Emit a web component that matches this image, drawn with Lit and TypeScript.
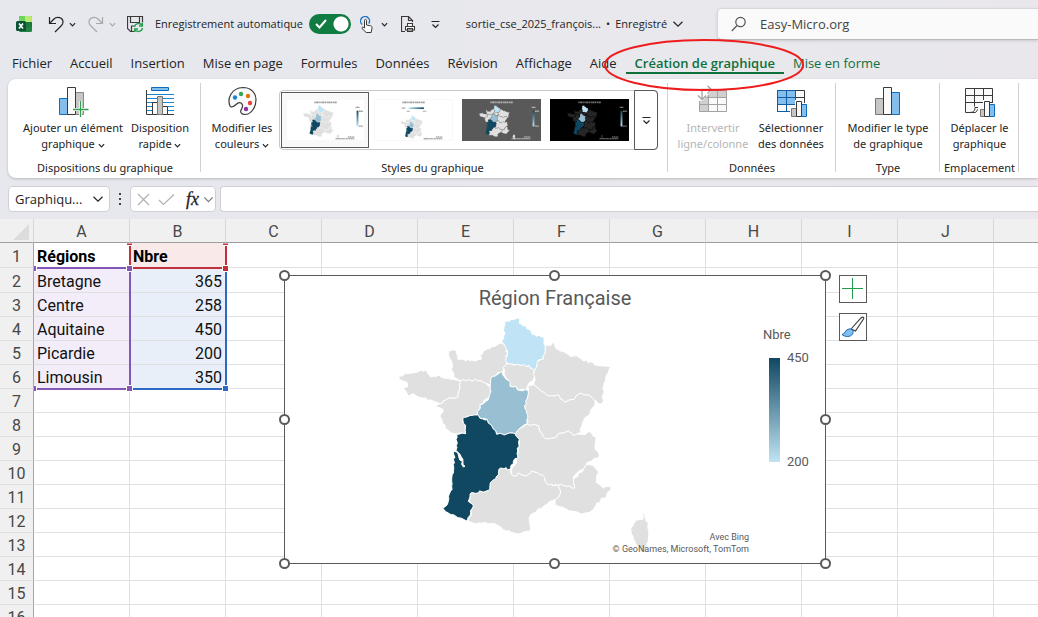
import { LitElement, html, svg, css, nothing } from "lit";
import { customElement, state } from "lit/decorators.js";
import { classMap } from "lit/directives/class-map.js";

type Tone = "none" | "low" | "mid" | "high";

const REGIONS: { tone: Tone; points: string }[] = [
  { tone: "none", points: "203 150 230 154 233 178 285 184 303 180 300 166 315 152 366 130 380 140 380 190 370 203 368 215 335 232 333 256 316 250 300 242 238 242 220 232 216 190 205 165" },
  { tone: "none", points: "55 232 75 222 115 216 138 210 152 232 180 228 195 236 238 242 240 268 235 290 205 296 180 312 160 304 130 295 100 282 85 290 70 265 82 262 78 246 60 240" },
  { tone: "none", points: "238 242 300 242 316 250 333 262 330 285 310 310 300 315 293 346 270 350 248 356 256 385 257 402 225 402 195 386 180 350 190 330 165 322 180 312 205 296 235 290 240 268" },
  { tone: "none", points: "370 203 380 193 420 196 448 198 463 213 460 240 445 254 440 272 412 268 408 260 390 260 385 240 372 222" },
  { tone: "none", points: "496 140 512 138 524 122 530 148 560 162 572 172 590 168 610 184 640 190 655 198 693 200 680 225 672 250 668 308 655 312 640 300 630 288 600 280 580 300 555 308 535 285 500 286 480 270 462 255 463 213 474 184 490 178" },
  { tone: "none", points: "443 258 462 255 480 270 500 286 535 285 555 308 580 300 600 280 630 288 645 305 640 322 620 350 605 380 600 400 582 408 565 394 540 400 530 412 495 416 485 400 475 378 442 374 440 340 434 318 442 295" },
  { tone: "none", points: "442 374 475 378 485 400 495 416 530 412 540 400 565 394 582 408 600 404 615 405 630 395 648 412 645 440 658 470 620 490 610 510 590 520 580 540 585 565 545 555 505 556 490 530 455 514 440 528 415 520 400 530 395 508 410 490 418 430 405 402 420 385" },
  { tone: "none", points: "362 505 392 508 400 530 415 520 440 528 455 514 490 530 505 556 535 556 542 580 525 600 490 620 450 650 448 695 415 703 370 690 350 675 318 668 290 672 265 664 280 620 268 605 270 583 325 572 335 545 355 525" },
  { tone: "none", points: "535 556 545 555 585 565 580 540 610 510 620 495 645 500 655 520 650 550 670 565 693 562 680 590 650 610 640 630 605 643 560 628 525 615 525 600 542 580" },
  { tone: "none", points: "792 638 796 655 806 670 807 700 802 730 796 760 780 755 765 725 755 705 753 685 765 665 788 660" },
  { tone: "low", points: "373 68 415 54 418 72 438 78 440 88 452 92 456 104 492 112 496 140 490 178 474 182 470 200 463 213 448 198 420 196 395 193 380 190 380 150 366 128 372 115" },
  { tone: "mid", points: "335 232 368 217 372 230 385 242 390 260 408 260 412 270 443 272 442 295 434 318 440 340 442 372 420 385 405 402 350 404 340 388 322 360 300 355 293 346 300 315 325 300 333 275" },
  { tone: "high", points: "248 356 293 346 300 356 322 360 340 388 350 404 405 402 418 420 413 455 414 475 400 485 392 508 362 505 355 525 335 545 325 572 270 583 265 605 280 620 262 664 240 655 205 640 188 625 205 605 215 560 220 520 223 455 235 465 250 502 255 500 243 470 228 452 232 430 230 404 257 402 256 385" },
];

/* Breaks each straight edge into small steps; the jitter depends only on the
   position, so neighbouring regions keep a common border. */
function coastline(points: string): string {
  const n = points.split(" ").map(Number);
  const out: string[] = [];
  for (let i = 0; i < n.length; i += 2) {
    const j = (i + 2) % n.length;
    const [x1, y1, x2, y2] = [n[i], n[i + 1], n[j], n[j + 1]];
    const steps = Math.max(1, Math.round(Math.hypot(x2 - x1, y2 - y1) / 8));
    for (let s = 0; s < steps; s++) {
      const x = x1 + ((x2 - x1) * s) / steps;
      const y = y1 + ((y2 - y1) * s) / steps;
      const w = s ? 3 : 0;
      out.push(`${(x + Math.sin(x * 12.9 + y * 7.2) * w).toFixed(1)},${(y + Math.cos(x * 5.3 + y * 9.1) * w).toFixed(1)}`);
    }
  }
  return out.join(" ");
}

const FILLS: Record<Tone, string> = { none: "#e0e0e0", low: "#c0e4f5", mid: "#99bfd2", high: "#104861" };

const mapShapes = (base = FILLS.none, line = "#ffffff", width = 3) =>
  REGIONS.map(
    (r) => svg`<polygon points=${coastline(r.points)} fill=${r.tone === "none" ? base : FILLS[r.tone]}
      stroke=${line} stroke-width=${width} stroke-linejoin="round" />`
  );

const ramp = (id: string, across = false) => svg`<linearGradient id=${id} x1="0" y1="0" x2=${across ? 1 : 0} y2=${across ? 0 : 1}>
  <stop offset="0" stop-color=${across ? FILLS.low : FILLS.high} /><stop offset="1" stop-color=${across ? FILLS.high : FILLS.low} /></linearGradient>`;

const thumb = (i: number, bg: string, base: string, ink: string, line: string) => html`
  <svg class="thumb" viewBox="0 0 542 288" preserveAspectRatio="none" aria-hidden="true">
    <defs>${ramp("g" + i, i === 1)}</defs>
    <rect width="542" height="288" fill=${bg} stroke="#f4f4f4" stroke-width=${i < 2 ? 8 : 0} />
    <path d="M194 23H350" stroke=${ink} stroke-width="13" stroke-dasharray="9 3 16 3 7 4" opacity=".6" />
    ${i === 1
      ? svg`<g transform="translate(165 100) scale(.245)">${mapShapes(base, line, 5)}</g>
        <rect x="238" y="57" width="104" height="12" fill="url(#g1)" />
        <path d="M190 63h26M225 84h22M335 84h24" stroke=${ink} stroke-width="8" stroke-dasharray="7 2" opacity=".6" />`
      : svg`<g transform="translate(96 25) scale(.333)">${mapShapes(base, line, 4)}</g>
        <rect x="484" y="80" width="13" height="108" fill=${"url(#g" + i + ")"} />
        <path d="M478 57h28M502 84h24M502 186h24" stroke=${ink} stroke-width="9" stroke-dasharray="7 2" opacity=".7" />`}
    <path d="M425 260h45M340 272h130" stroke=${ink} stroke-width="7" stroke-dasharray="12 2 7 2" opacity=".7" />
  </svg>`;

const chevron = (size = 7) => html`<svg class="chev" width=${size} height=${size} viewBox="0 0 8 8" aria-hidden="true">
  <path d="M1 2.5 4 5.5 7 2.5" fill="none" stroke="currentColor" stroke-width="1.2" vector-effect="non-scaling-stroke" /></svg>`;

const icon = (body: unknown, w = 32, h = 32) => html`<svg width=${w} height=${h} viewBox=${`0 0 ${w} ${h}`} fill="none" aria-hidden="true">${body}</svg>`;

const ICONS = {
  add: icon(svg`<path d="M2.5 13.5h8v16h-8z" fill="#83beec" stroke="#0f6cbd"/><path d="M18.5 7.500h8v22h-8z" fill="#c8c6c4" stroke="#8a8886"/>
    <path d="M10.5 2.500h8v27h-8z" fill="#fafafa" stroke="#3b3a39"/><path d="M23.5 16v16M16 24.500h15.500" stroke="#fff" stroke-width="3"/><path d="M23.5 16v16M16 24.500h15.500" stroke="#2ea04f" stroke-width="1.3"/>`),
  layout: icon(svg`<path d="M7.5 2.5h17v3h-17z" fill="#83beec" stroke="#0f6cbd"/><path d="M3 9.500h27M3 13.500h27M3 17.500h27M3 21.500h27M3 25.500h27" stroke="#1a86d0"/>
    <path d="M2.5 5v24.500H30" stroke="#3b3a39"/><path d="M8.5 17.500h5v12h-5zM18.500 21.500h5v8h-5z" fill="#fafafa" stroke="#3b3a39"/><path d="M13.5 11.500h5v18h-5z" fill="#c8c6c4" stroke="#797775"/>`),
  palette: icon(svg`<path d="M4 21C1 14 5 3 17 2.5 25 2.5 30 8 30 14.5c0 8-5 15-11 15-3.500 0-5-2-4-4.500 1-2 2-3 1.500-5-1-3-4-3-6.500-.5-2 2-5 3.500-6 1.500z" fill="#fafafa" stroke="#3b3a39" stroke-width="1.2"/>
    <circle cx="9" cy="12.5" r="2.2" fill="#1a86d0"/><circle cx="15" cy="9" r="2.2" fill="#33a852"/><circle cx="22" cy="11" r="2.2" fill="#e3730f"/><circle cx="24" cy="18" r="2.2" fill="#f03e3e"/><circle cx="20" cy="24" r="2.2" fill="#8e2fa8"/>`),
  swap: icon(svg`<path d="M2.5 5.500h27v21h-27z" fill="#fafafa"/><path d="M2.5 5.500h27v7h-18v14h-9z" fill="#d2d0ce"/><path d="M2.5 5.500h27v21h-27zM2.500 12.500h27M2.500 19.500h27M11.500 5.500v21M20.500 5.500v21" stroke="#a3a2a0"/>
    <path d="M0 0h14v7L5 16H0z" fill="#fff"/><path d="M5 14V4.500h9M1 10.500l4 4 4-4M10.500 1l4 3.500-4 4" stroke="#a3a2a0" stroke-width="1.3"/>`),
  select: icon(svg`<path d="M2.5 5.500h27v21h-27z" fill="#fafafa" stroke="#3b3a39"/><path d="M20.5 5.500v7h9" stroke="#3b3a39"/><path d="M2.5 5.500h18v14h-18z" fill="#83beec"/><path d="M2.5 12.500h18M2.500 19.500h18M11.500 5.500v21M20.500 5.500v14M2.500 5.500h18M2.500 5.500v21h13" stroke="#0f5ba8"/>
    <path d="M15 22h5v-7h7v3h5v14H15z" fill="#fff"/><path d="M16.5 23.500h5v8h-5z" fill="#c8c6c4" stroke="#797775"/><path d="M26.5 19.500h5v12h-5z" fill="#83beec" stroke="#0f6cbd"/><path d="M21.5 16.500h5v15h-5z" fill="#fafafa" stroke="#3b3a39"/>`),
  type: icon(svg`<path d="M3.5 13.500h8v16h-8z" fill="#c8c6c4" stroke="#797775"/><path d="M19.5 7.500h8v22h-8z" fill="#83beec" stroke="#0f6cbd"/><path d="M11.5 2.500h8v27h-8z" fill="#fafafa" stroke="#3b3a39"/>`),
  move: icon(svg`<path d="M2.5 3.500h27v19h-13l-4 5h-10z" fill="#fafafa" stroke="#3b3a39"/><path d="M2.5 10.500h27M2.500 17.500h27M11.500 3.500v18M20.500 3.500v18M6 27.500c4 0 6-1 6-5h6" stroke="#3b3a39"/>
    <path d="M15 22h5v-7h7v3h5v14H15z" fill="#fff"/><path d="M17.5 24.500h5v7h-5z" fill="#c8c6c4" stroke="#797775"/><path d="M26.5 19.500h5v12h-5z" fill="#83beec" stroke="#0f6cbd"/><path d="M21.5 16.500h5v15h-5z" fill="#fafafa" stroke="#3b3a39"/>`),
  excel: icon(svg`<rect x="3" width="13" height="16" rx="1.5" fill="#21833f"/><path d="M3 1.5Q3 0 4.5 0H9v6H3z" fill="#6fd35f"/><path d="M9 0h5.500Q16 0 16 1.500V6H9z" fill="#bdea72"/><path d="M9 6h7v5H9z" fill="#1c7a3a"/><rect y="5" width="10" height="10" rx="1.5" fill="#0b5335"/>
    <path d="M3 7.500l4 5M7 7.500l-4 5" stroke="#fff" stroke-width="1.6"/>`, 16, 16),
  undo: icon(svg`<path d="M1.5 1v6.500H8M1.500 7.500 6 3c3-3 9-1.500 9 3 0 1.500-.5 2.500-1.500 3.500L7 16" stroke="currentColor" stroke-width="1.2"/>`, 16, 17),
  redo: icon(svg`<path d="M14.5 1v6.500H8M14.500 7.500 10 3C7 0 1 1.500 1 6c0 1.500.5 2.500 1.500 3.500L9 16" stroke="currentColor" stroke-width="1.2"/>`, 16, 17),
  save: icon(svg`<path d="M7 15.500H3.500l-3-3V.5h15v6M3.500.5v6h9v-6M4.500 15v-5H7" stroke="#3b3a39" stroke-width="1.2"/>
    <path d="M7.500 11c.5-4 6-4.500 7.500-1.500M15.300 7v3H12M15.500 12c-.5 4-6 4.500-7.500 1.500M7.700 16v-3H11" stroke="#2ea04f" stroke-width="1.5"/>`, 17, 17),
  touch: icon(svg`<path d="M2.200 8.500a4.500 4.500 0 1 1 6.600-1" stroke="#1a78c8" stroke-width="1.4"/><path d="M4.500 11V4.500c0-1.500 2-1.500 2 0V9l4 .8c1.300.3 1.700 1 1.500 2.200l-.8 4.500h-5L2 12.500c-.6-1.200 1-2 2.500-.5z" fill="#fafafa" stroke="#3b3a39"/>`, 14, 17),
  print: icon(svg`<path d="M4 15.500H.5V.5h7l4 4V6M7.500.5v4h4" stroke="#3b3a39" stroke-width="1.2"/><path d="M4.500 10.500h9v3.500h-9zM6.500 10.500v-3h5v3M6.500 12.500h5v3h-5z" fill="#fafafa" stroke="#3b3a39" stroke-width="1.1"/>`, 15, 16),
  more: icon(svg`<path d="M.5 1.500h8M1.500 4.500l3 3 3-3" stroke="currentColor" stroke-width="1.2"/>`, 9, 9),
  search: icon(svg`<circle cx="9.500" cy="6" r="4.700" stroke="#555" stroke-width="1.2"/><path d="M6 9.500.8 15" stroke="#555" stroke-width="1.2"/>`, 15, 16),
  cross: icon(svg`<path d="M1 1l11 11M12 1 1 12" stroke="#b0b0b0" stroke-width="1.2"/>`, 13, 13),
  tick: icon(svg`<path d="M1 7l4.500 4.500L16 1.500" stroke="#b0b0b0" stroke-width="1.2"/>`, 17, 13),
  plus: icon(svg`<path d="M10.500 0v21M0 10.500h21" stroke="#1e9e4a"/>`, 22, 22),
  brush: icon(svg`<path d="M10 13 20 2c1.500-1.500 3.500-1 2.500 1L14.500 15z" fill="#fafafa" stroke="#3b3a39" stroke-width="1.1"/><path d="M1 18.500c3 0 3-5 7-5.500 3.500-.5 5 2.500 3.500 5-2 3.500-8 3-10.500.5z" fill="#83beec" stroke="#0f6cbd"/>`, 24, 22),
};

const TABS = ["Fichier", "Accueil", "Insertion", "Mise en page", "Formules", "Données", "Révision", "Affichage", "Aide", "Création de graphique", "Mise en forme"];
const COLUMNS = ["A", "B", "C", "D", "E", "F", "G", "H", "I", "J", "K"];
const DATA: [string, string][] = [["Régions", "Nbre"], ["Bretagne", "365"], ["Centre", "258"], ["Aquitaine", "450"], ["Picardie", "200"], ["Limousin", "350"]];

@customElement("app-root")
export class AppRoot extends LitElement {
  @state() private tab = "Création de graphique";

  static styles = css`
    * { box-sizing: border-box; }
    :host {
      display: flex; flex-direction: column; height: 100vh; overflow: hidden;
      background: linear-gradient(90deg, #e6e8ee, #e8e8ed 60%, #e9e7ec);
      color: #242424; font: 11px/16px "Noto Sans", "Open Sans", sans-serif;
    }
    button { font: inherit; color: inherit; background: none; border: 0; padding: 0; display: flex; align-items: center; justify-content: center; flex: none; }
    input { font: inherit; color: inherit; min-width: 0; }
    svg { flex: none; display: block; }

    .titlebar { display: flex; align-items: center; height: 48px; padding-left: 16px; flex: none; font-family: "Open Sans", sans-serif; }
    .titlebar > * { flex: none; }
    .undo { margin-left: 16px; gap: 5px; }
    .redo { margin-left: 12px; gap: 5px; color: #a8a8ac; }
    .save { margin: 0 11px; }
    .auto { display: flex; align-items: center; gap: 6px; position: relative; }
    .switch { appearance: none; width: 42px; height: 20px; margin: 0; border-radius: 10px; background: radial-gradient(circle at 32px 10px, #fff 7px, #107c41 8px); }
    .check { position: absolute; right: 24px; top: 4px; pointer-events: none; }
    .touch { margin-left: 9px; gap: 7px; }
    .print { margin: 0 15px 0 13px; }
    .file { display: flex; align-items: center; gap: 5px; margin-left: 25px; width: 220px; }
    .search { display: flex; align-items: center; gap: 14px; flex: 1 1 0; height: 32px; margin-left: 32px; padding-left: 13px; background: #fafafa; border: 1px solid #d8d8dc; border-right: 0; border-bottom-color: #bbb; border-radius: 5px 0 0 5px; box-shadow: 0 1px 3px #0002; }
    .search input { border: 0; background: none; font-size: 13px; color: #444; padding: 0; flex: 1; }

    .tabs { display: flex; height: 31px; flex: none; padding-left: 3px; font: 13px/30px "Open Sans", sans-serif; }
    .tab { position: relative; padding: 0 9px; white-space: nowrap; height: 30px; }
    .tab.green { color: #0f703b; }
    .tab.active { font-weight: 600; }
    .tab.active::after { content: ""; position: absolute; left: 0; right: 0; bottom: 4px; height: 2px; background: #0f703b; }
    .ring { position: absolute; left: -24px; top: -10px; z-index: 3; pointer-events: none; }

    .ribbon { display: flex; height: 99px; flex: none; margin-left: 8px; padding: 4px 0 2px; background: #fff; border-radius: 8px 0 0 8px; box-shadow: 0 1px 3px #0003; }
    .group { display: flex; flex-direction: column; justify-content: space-between; align-items: center; padding: 0 6px; flex: none; position: relative; }
    .group.first { padding: 0 9px 0 10px; }
    .group.styles { padding: 0 10px 0 6px; }
    .group.last { padding: 0 4px; }
    .group::after { content: ""; position: absolute; right: 0; top: 0; bottom: 4px; width: 1px; background: #d1d1d1; }
    .tools { display: flex; align-items: flex-start; }
    .cmd { flex-direction: column; gap: 3px; padding-top: 2px; }
    .cmd.w64 { width: 64px; } .cmd.w70 { width: 70px; } .cmd.w78 { width: 78px; } .cmd.w92 { width: 92px; } .cmd.w110 { width: 110px; }
    .cmd:disabled { color: #b5b5b5; }
    .lines { display: block; white-space: nowrap; text-align: center; }
    .chev { display: inline-block; vertical-align: middle; }
    .gallery { display: flex; align-items: center; width: 379px; height: 60px; margin: 7px 0 0 2px; border: 1px solid #c8c8c8; border-radius: 4px; }
    .style { width: 88px; height: 56px; }
    .style.on { margin-left: 1px; border: 1px solid #595959; background: #f9f9f9; }
    .thumb { width: 79px; height: 42px; }
    .expand { width: 24px; height: 60px; margin: 0 -1px 0 auto; border: 1px solid #595959; border-radius: 0 4px 4px 0; }

    .formula { display: flex; align-items: center; flex: none; padding: 8px 0 7px 8px; font: 13px/24px "Open Sans", sans-serif; }
    .field { display: flex; align-items: center; height: 26px; background: #fff; border: 1px solid #d0d0d4; border-radius: 4px; }
    .field input { border: 0; background: none; padding: 0; width: 100%; }
    .name { width: 102px; padding: 0 5px 0 6px; }
    .dots { width: 20px; display: grid; justify-items: center; gap: 3px; }
    .dot { width: 2px; height: 2px; background: #444; }
    .fx { width: 86px; gap: 8px; padding: 0 2px 0 6px; }
    .fn { font: italic 18px/24px "Liberation Serif", serif; margin-left: 3px; -webkit-text-stroke: 0.3px currentColor; }
    .fxgap { margin-left: -4px; color: #777; }
    .entry { flex: 1; margin-left: 4px; border-right: 0; border-radius: 4px 0 0 4px; }

    .sheet { position: relative; flex: 1; overflow: hidden; background: #fff; font: 16px/20px Roboto, sans-serif; }
    table { border-collapse: separate; border-spacing: 0; table-layout: fixed; width: 1130px; min-width: 100%; }
    .col { width: 96px; }
    .col:last-child { width: auto; }
    .rowhead { width: 34px; }
    th, td { padding: 3px 3px 0; height: 24px; border-right: 1px solid #e0e0e0; border-bottom: 1px solid #e0e0e0; white-space: nowrap; }
    .tall th, .tall td { height: 25px; }
    th { background: #f0f0f0; color: #484848; font-weight: 400; text-align: center; }
    thead th { border-bottom-color: #9e9e9e; border-right-color: #d8d8d8; }
    tbody th { border-right-color: #a6a6a6; padding: 3px 0 0; }
    .corner svg { margin-left: 10px; }
    td { color: #111; }
    td.num { text-align: right; }
    td.bold { font-weight: 700; color: #000; }
    td.red { background: #f9e9e9; } td.violet { background: #f2edf8; } td.blue { background: #e9eff9; }
    .ranges { position: absolute; left: 34px; top: 24px; pointer-events: none; }

    .chart { position: absolute; left: 284px; top: 56px; width: 542px; height: 289px; margin: 0; border: 1px solid #595959; background: #fff; color: #595959; padding-top: 10px; }
    .title { margin: 0 0 3px; font: 400 20px/24px Roboto, sans-serif; text-align: center; }
    .plot { display: flex; padding-left: 95px; }
    .legend { margin: 14px 0 0 113px; font-size: 13px; line-height: 16px; }
    .scale { display: flex; gap: 7px; height: 120px; margin: 7px 0 0 6px; }
    .bar { width: 11px; margin: 8px 0; background: linear-gradient(#104861, #c0e4f5); }
    .ends { display: flex; flex-direction: column; justify-content: space-between; }
    .credits { position: absolute; right: 76px; bottom: 8px; text-align: right; font-size: 9px; line-height: 12px; }
    .handle { position: absolute; width: 11px; height: 11px; margin: -6px; border: 2px solid #595959; border-radius: 50%; background: #fff; }
    .t { top: 0; } .m { top: 50%; } .b { top: 100%; margin-top: -5px; } .l { left: 0; } .c { left: 50%; } .r { left: 100%; margin-left: -5px; }
    .floating { position: absolute; left: 839px; top: 56px; display: grid; gap: 10px; }
    .floating button { width: 28px; height: 28px; border: 1px solid #595959; background: #fff; }
  `;

  private cmd(image: unknown, first: string, second: string, width: string, menu = false, disabled = false) {
    return html`<button class="cmd ${width}" ?disabled=${disabled}>${image}<span class="lines">${first}<br />${second}${menu ? html` ${chevron()}` : nothing}</span></button>`;
  }

  private cell(row: number, col: number) {
    const value = DATA[row]?.[col];
    if (value === undefined) return html`<td></td>`;
    const classes = { bold: row === 0, num: row > 0 && col === 1, red: row === 0 && col === 1, violet: row > 0 && col === 0, blue: row > 0 && col === 1 };
    return html`<td class=${classMap(classes)}>${value}</td>`;
  }

  render() {
    return html`
      <header class="titlebar">
        ${ICONS.excel}
        <button class="undo" aria-label="Annuler">${ICONS.undo}${chevron()}</button>
        <button class="redo" aria-label="Rétablir">${ICONS.redo}${chevron()}</button>
        <button class="save" aria-label="Enregistrer">${ICONS.save}</button>
        <label class="auto">Enregistrement automatique
          <input class="switch" type="checkbox" role="switch" checked />
          <svg class="check" width="12" height="12" viewBox="0 0 12 12"><path d="M1 6l3.500 3.500L11 2" fill="none" stroke="#fff" stroke-width="2" /></svg>
        </label>
        <button class="touch" aria-label="Mode tactile">${ICONS.touch}${chevron()}</button>
        <button class="print" aria-label="Aperçu et impression">${ICONS.print}</button>
        <button aria-label="Personnaliser">${ICONS.more}</button>
        <button class="file"><span>sortie_cse_2025_françois...</span><span>•</span><span>Enregistré</span>${chevron(12)}</button>
        <label class="search">${ICONS.search}<input type="text" aria-label="Rechercher" value="Easy-Micro.org" /></label>
      </header>

      <nav class="tabs">
        ${TABS.map((t, i) => html`<button class=${classMap({ tab: true, green: i > 8, active: t === this.tab })} @click=${() => (this.tab = t)}>${t}${i === 9
          ? html`<svg class="ring" width="204" height="54" viewBox="0 0 204 54"><ellipse cx="102" cy="27" rx="99" ry="25" fill="none" stroke="#ee1c1c" stroke-width="2" /></svg>`
          : nothing}</button>`)}
      </nav>

      <section class="ribbon">
        <div class="group first">
          <div class="tools">${this.cmd(ICONS.add, "Ajouter un élément", "graphique", "w110", true)}${this.cmd(ICONS.layout, "Disposition", "rapide", "w64", true)}</div>
          <span>Dispositions du graphique</span>
        </div>
        <div class="group styles">
          <div class="tools">
            ${this.cmd(ICONS.palette, "Modifier les", "couleurs", "w70", true)}
            <div class="gallery">
              <button class="style on" aria-label="Style 1">${thumb(0, "#ffffff", "#e0e0e0", "#595959", "#ffffff")}</button>
              <button class="style" aria-label="Style 2">${thumb(1, "#ffffff", "#e0e0e0", "#595959", "#ffffff")}</button>
              <button class="style" aria-label="Style 3">${thumb(2, "#595959", "#e0e0e0", "#f0f0f0", "#595959")}</button>
              <button class="style" aria-label="Style 4">${thumb(3, "#000000", "#262626", "#bdbdbd", "#000000")}</button>
              <button class="expand" aria-label="Autres styles">${ICONS.more}</button>
            </div>
          </div>
          <span>Styles du graphique</span>
        </div>
        <div class="group">
          <div class="tools">${this.cmd(ICONS.swap, "Intervertir", "ligne/colonne", "w78", false, true)}${this.cmd(ICONS.select, "Sélectionner", "des données", "w78")}</div>
          <span>Données</span>
        </div>
        <div class="group">
          <div class="tools">${this.cmd(ICONS.type, "Modifier le type", "de graphique", "w92")}</div>
          <span>Type</span>
        </div>
        <div class="group last">
          <div class="tools">${this.cmd(ICONS.move, "Déplacer le", "graphique", "w70")}</div>
          <span>Emplacement</span>
        </div>
      </section>

      <section class="formula">
        <div class="field name"><input type="text" aria-label="Zone Nom" value="Graphiqu..." /><button aria-label="Liste des noms">${chevron(12)}</button></div>
        <span class="dots"><i class="dot"></i><i class="dot"></i><i class="dot"></i></span>
        <div class="field fx">
          <button aria-label="Annuler la saisie">${ICONS.cross}</button>
          <button aria-label="Valider la saisie">${ICONS.tick}</button>
          <button class="fn">fx</button><button class="fxgap" aria-label="Fonctions">${chevron(11)}</button>
        </div>
        <div class="field entry"><input type="text" aria-label="Barre de formule" /></div>
      </section>

      <main class="sheet">
        <table>
          <thead><tr>
            <th class="rowhead corner"><svg width="16" height="16"><path d="M16 0v16H0z" fill="#dcdcdc" /></svg></th>
            ${COLUMNS.map((c) => html`<th class="col" scope="col">${c}</th>`)}
          </tr></thead>
          <tbody>
            ${Array.from({ length: 16 }, (_, r) => html`<tr class=${r < 2 ? "tall" : ""}><th scope="row">${r + 1}</th>${COLUMNS.map((_c, c) => this.cell(r, c))}</tr>`)}
          </tbody>
        </table>

        <svg class="ranges" width="196" height="150" fill="none">
          <path d="M96 0V24M192 0V24M98 25H192" stroke="#c0313b" stroke-width="2" />
          <path d="M192 28V146H98" stroke="#2f69c6" stroke-width="2" />
          <path d="M0 25H96M96 26V146M0 146H96" stroke="#8257b8" stroke-width="2" />
          <path d="M92.5 0v2.500h6V0zM188.500 0v2.500h6V0zM188.500 22.500h6v6h-6z" fill="#c0313b" stroke="#fff" />
          <path d="M188.5 142.500h6v6h-6z" fill="#2f69c6" stroke="#fff" />
          <path d="M-3.5 22.500h6v6h-6zM92.500 22.500h6v6h-6zM-3.500 142.500h6v6h-6zM92.500 142.500h6v6h-6z" fill="#8257b8" stroke="#fff" />
        </svg>

        <figure class="chart">
          <h2 class="title">Région Française</h2>
          <div class="plot">
            <svg width="270" height="240" viewBox="0 40 810 720" role="img" aria-label="Carte de France">${mapShapes()}</svg>
            <div class="legend">Nbre
              <div class="scale"><div class="bar"></div><div class="ends"><span>450</span><span>200</span></div></div>
            </div>
          </div>
          <div class="credits">Avec Bing<br />© GeoNames, Microsoft, TomTom</div>
          ${["t l", "t c", "t r", "m l", "m r", "b l", "b c", "b r"].map((p) => html`<i class="handle ${p}"></i>`)}
        </figure>
        <div class="floating">
          <button aria-label="Éléments de graphique">${ICONS.plus}</button>
          <button aria-label="Styles de graphique">${ICONS.brush}</button>
        </div>
      </main>
    `;
  }
}
